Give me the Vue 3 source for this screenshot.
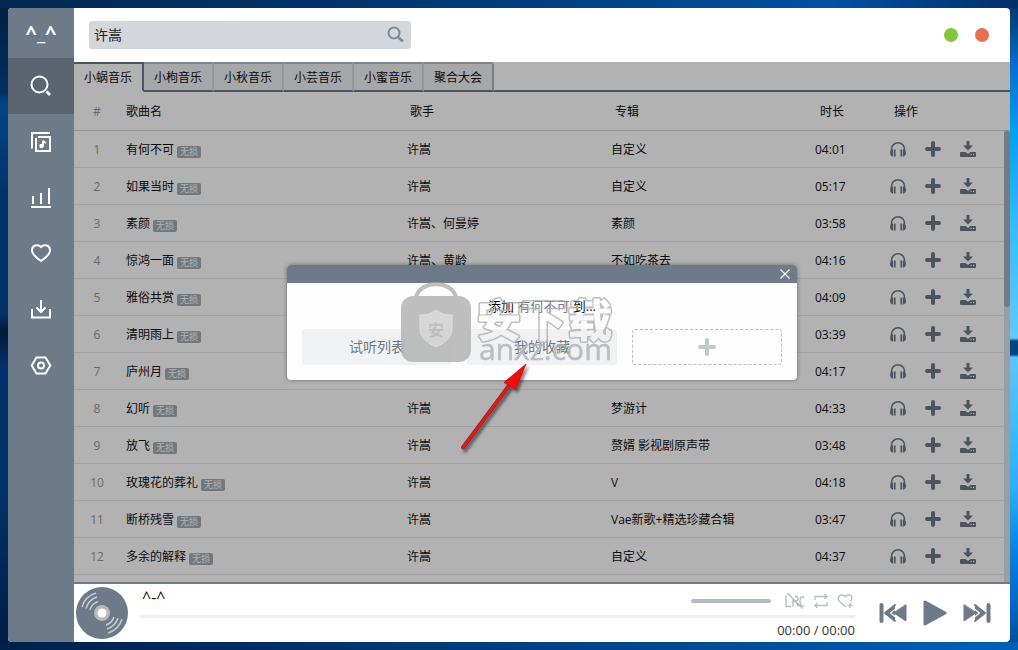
<script setup>
import { ref } from 'vue'

const keyword = ref('许嵩')
const volume = ref(100)
const progress = ref(0)
const tabs = ['小蜗音乐', '小枸音乐', '小秋音乐', '小芸音乐', '小蜜音乐', '聚合大会']
const activeTab = ref(0)

const songs = [
  ['有何不可', '许嵩', '自定义', '04:01'],
  ['如果当时', '许嵩', '自定义', '05:17'],
  ['素颜', '许嵩、何曼婷', '素颜', '03:58'],
  ['惊鸿一面', '许嵩、黄龄', '不如吃茶去', '04:16'],
  ['雅俗共赏', '许嵩', '青年晚报', '04:09'],
  ['清明雨上', '许嵩', '自定义', '03:39'],
  ['庐州月', '许嵩', '寻雾启示', '04:17'],
  ['幻听', '许嵩', '梦游计', '04:33'],
  ['放飞', '许嵩', '赘婿 影视剧原声带', '03:48'],
  ['玫瑰花的葬礼', '许嵩', 'V', '04:18'],
  ['断桥残雪', '许嵩', 'Vae新歌+精选珍藏合辑', '03:47'],
  ['多余的解释', '许嵩', '自定义', '04:37'],
]
</script>

<template>
  <div class="desktop">
    <div class="window">
      <aside class="sidebar">
        <div class="logo">^_^</div>
        <nav>
          <button class="nav active" aria-label="搜索">
            <svg viewBox="0 0 24 24"><circle cx="10.500" cy="10.500" r="8" /><path d="M17.500 17.500l3.500 3.500" stroke-width="2.800" /></svg>
          </button>
          <button class="nav" aria-label="歌单">
            <svg viewBox="0 0 24 24"><path d="M3 18.500V3h18" /><path d="M9 7h12v14H7V8" /><circle cx="12.500" cy="16" r="1.500" fill="#fff" stroke-width="1.500" /><path d="M14 16V10.500c.5 1.500 2.500 1.500 2.500 3" stroke-width="1.800" /></svg>
          </button>
          <button class="nav" aria-label="排行">
            <svg viewBox="0 0 24 24"><path d="M2 21h20M4 18v-8M12 18V7M20 18V2" /></svg>
          </button>
          <button class="nav" aria-label="收藏">
            <svg viewBox="0 0 24 24"><path d="M12 19C7 15.500 3 12 3 8.500 3 3 9 2 12 5 15 2 21 3 21 8.500c0 3.500-4 7-9 10.500z" /></svg>
          </button>
          <button class="nav" aria-label="下载">
            <svg viewBox="0 0 24 24"><path d="M3 11v8.500h18V11M12 2v12M7.500 9.500L12 14l4.500-4.500" /></svg>
          </button>
          <button class="nav" aria-label="设置">
            <svg viewBox="0 0 24 24"><path d="M7.500 3.500h9l4.800 8-4.800 8h-9l-4.800-8z" /><circle cx="12" cy="11.500" r="3" /></svg>
          </button>
        </nav>
      </aside>

      <div class="main">
        <header class="topbar">
          <form class="search" @submit.prevent>
            <input v-model="keyword" type="text" aria-label="搜索歌曲" />
            <button aria-label="搜索">
              <svg viewBox="0 0 18 18"><circle cx="7" cy="7" r="5.500" /><path d="M11.500 11.500l4.500 4" stroke-width="2.600" /></svg>
            </button>
          </form>
          <div class="dots">
            <button class="dot green" aria-label="最小化"></button>
            <button class="dot red" aria-label="关闭"></button>
          </div>
        </header>

        <section class="content">
          <div class="tabs">
            <button
              v-for="(tab, i) in tabs"
              :key="tab"
              class="tab"
              :class="{ current: i === activeTab, last: i === tabs.length - 1 }"
              @click="activeTab = i"
            >{{ tab }}</button>
            <span class="filler"></span>
          </div>

          <div class="list">
            <table>
              <colgroup>
                <col class="c-no" /><col /><col class="c-artist" /><col class="c-album" /><col class="c-time" /><col class="c-ops" />
              </colgroup>
              <thead>
                <tr>
                  <th class="no">#</th>
                  <th>歌曲名</th>
                  <th class="h-artist">歌手</th>
                  <th class="h-album">专辑</th>
                  <th class="h-time">时长</th>
                  <th class="h-ops">操作</th>
                </tr>
              </thead>
              <tbody>
                <tr v-for="(s, i) in songs" :key="s[0]">
                  <td class="no">{{ i + 1 }}</td>
                  <td><div class="name">{{ s[0] }}<span class="badge">无损</span></div></td>
                  <td>{{ s[1] }}</td>
                  <td>{{ s[2] }}</td>
                  <td class="time">{{ s[3] }}</td>
                  <td class="ops">
                    <div>
                      <button aria-label="试听">
                        <svg viewBox="0 0 16 16"><path d="M1.500 10.500V8a6.500 6.200 0 0 1 13 0v2.500" fill="none" stroke="#6d7a89" stroke-width="1.500" /><path d="M3.200 8.500v7H2Q0 15 0 12t2-3.500zM4 8.500h1.600v7H4zM12.800 8.500v7H14q2-.5 2-3.500t-2-3.500zM10.400 8.500H12v7h-1.600z" /></svg>
                      </button>
                      <button aria-label="添加">
                        <svg viewBox="0 0 16 16"><path d="M8 2v12M2 8h12" stroke="#6d7a89" stroke-width="4" stroke-linecap="round" /></svg>
                      </button>
                      <button aria-label="下载">
                        <svg viewBox="0 0 16 16"><path d="M6.500 0h3v4.500H13L8 9.500l-5-5h3.500zM1 11h4.500L8 12.800 10.500 11H15q1 0 1 1v3q0 1-1 1H1q-1 0-1-1v-3q0-1 1-1z" /><path d="M10.500 13.500h1.200M13 13.500h1.200" stroke="#fff" stroke-width="1.200" /></svg>
                      </button>
                    </div>
                  </td>
                </tr>
              </tbody>
            </table>
            <div class="scrollbar"><div class="thumb"></div></div>
          </div>

          <div class="mask">
            <div class="dialog" role="dialog" aria-label="添加到列表">
              <div class="dialog-head">
                <button aria-label="关闭">
                  <svg viewBox="0 0 10 10"><path d="M0.500 0.500l9 9M9.500 0.500l-9 9" /></svg>
                </button>
              </div>
              <div class="dialog-body">
                <p>添加 <span>有何不可</span> 到...</p>
                <div class="choices">
                  <button>试听列表</button>
                  <button>我的收藏</button>
                  <button class="new" aria-label="新建列表">
                    <svg viewBox="0 0 18 18"><path d="M9 2v14M2 9h14" /></svg>
                  </button>
                </div>
              </div>
              <svg class="brand" viewBox="0 0 240 190" aria-hidden="true">
                <defs>
                  <mask id="hollow" maskUnits="userSpaceOnUse" x="0" y="0" width="240" height="190">
                    <rect width="240" height="190" fill="#fff" />
                    <g class="cn inner"><text x="79" y="55">安</text><text x="124" y="55">下</text><text x="170" y="55">载</text></g>
                  </mask>
                  <filter id="soft" x="-20%" y="-20%" width="150%" height="150%">
                    <feDropShadow dx="2" dy="3" stdDeviation="1.500" flood-color="#000" flood-opacity=".5" />
                  </filter>
                </defs>
                <g fill="#b4b4b4" opacity=".85">
                  <path d="M18 15C22-2 54-2 58 15" fill="none" stroke="#b4b4b4" stroke-width="4" />
                  <rect x="3" y="14" width="70" height="66" rx="12" />
                  <path d="M38 28c5 4 10 5 16 5v14c0 9-8 14-16 18-8-4-16-9-16-18V33c6 0 11-1 16-5z" fill="#d0d0d0" stroke="#dcdcdc" />
                  <text class="mini" x="30" y="54">安</text>
                  <g class="cn" mask="url(#hollow)"><text x="79" y="55">安</text><text x="124" y="55">下</text><text x="170" y="55">载</text></g>
                  <text class="latin" x="81" y="78">anxz.com</text>
                </g>
                <g filter="url(#soft)">
                  <path d="M65 165.500L111.500 103" fill="none" stroke="#b01515" stroke-width="4" stroke-linecap="round" />
                  <path d="M65 165.500L111.500 103" fill="none" stroke="#d42020" stroke-width="2.500" stroke-linecap="round" />
                  <path d="M128 82L106 100.500l11.500 7z" fill="#f20a0a" stroke="#c01212" stroke-width=".8" />
                </g>
              </svg>
            </div>
          </div>
        </section>

        <footer class="player">
          <svg class="disc" viewBox="0 0 52 52">
            <circle cx="26" cy="26" r="26" fill="#6d7a89" />
            <g fill="none" stroke="#c3cbd4" stroke-width="1.500">
              <path d="M6 20A21 21 0 0 1 20 6M10 21.500A17 17 0 0 1 21 10M14 23A12.500 12.500 0 0 1 22 14.500" />
              <path d="M46 32A21 21 0 0 1 32 46M42 31A17 17 0 0 1 31 42M38 30A12.500 12.500 0 0 1 30 38" />
            </g>
            <circle cx="26" cy="26" r="8" fill="#b9b9b9" /><circle cx="26" cy="26" r="4.500" fill="#fff" />
          </svg>
          <div class="track">
            <div class="line">
              <span class="title">^-^</span>
              <input v-model="volume" class="volume" type="range" aria-label="音量" />
              <button aria-label="歌词">
                <svg width="20" height="16" viewBox="0 0 20 16"><path d="M1 2v11.500h5M8 13.500V5.500M10 3q3 .5 3 2.800T10 8.500H8.500M10.500 8.500l3 5M19.500 4.500q-4.500-2.500-4.500 3.500t4.500 5M2.500 0L17.500 15.500" /></svg>
              </button>
              <button aria-label="循环">
                <svg width="14" height="16" viewBox="0 0 14 16"><path d="M1 7V3.500h12M10.500 1L13 3.500 10.500 6M13 9v3.500H1M3.500 10L1 12.500 3.500 15" /></svg>
              </button>
              <button aria-label="收藏">
                <svg width="16" height="16" viewBox="0 0 16 16"><path d="M9 14L3 9C-1 5 3-.5 8 3.500 13-.5 17 4 13.500 8.500M13 10v5M10.500 12.500h5" /></svg>
              </button>
            </div>
            <input v-model="progress" class="progress" type="range" aria-label="播放进度" />
            <div class="clock">00:00 / 00:00</div>
          </div>
          <div class="controls">
            <button aria-label="上一首">
              <svg width="28" height="22" viewBox="0 0 28 22"><path d="M2.500 3v16" stroke-width="4" /><path d="M16 3L6 11l10 8" stroke-width="2" class="solid" /><path d="M27 3v16L15 11z" class="solid" stroke-width="1" /><path d="M21 3.500L11.500 11l9.500 7.500" stroke="#fff" stroke-width="1.200" /></svg>
            </button>
            <button aria-label="播放">
              <svg width="24" height="26" viewBox="0 0 24 26"><path d="M2 2v22l20-11z" class="solid" stroke-width="3" /></svg>
            </button>
            <button aria-label="下一首">
              <svg width="28" height="22" viewBox="0 0 28 22"><path d="M25.500 3v16" stroke-width="4" /><path d="M12 3l10 8-10 8" stroke-width="2" class="solid" /><path d="M1 3v16l12-8z" class="solid" stroke-width="1" /><path d="M7 3.500L16.500 11 7 18.500" stroke="#fff" stroke-width="1.200" /></svg>
            </button>
          </div>
        </footer>
      </div>
    </div>
  </div>
</template>

<style>
body {
  margin: 0;
}
</style>

<style scoped>
* {
  box-sizing: border-box;
}
.desktop {
  height: 100vh;
  padding: 8px;
  font-family: "Open Sans", "Noto Sans CJK SC", sans-serif;
  font-size: 12px;
  line-height: 16px;
  color: #111;
  background:
    linear-gradient(90deg, #02284f, #003a75 45%, #0052a2 82%, #003068) top / 100% 8px no-repeat,
    linear-gradient(90deg, #00204a, #003a7a 45%, #0060b4) bottom / 100% 8px no-repeat,
    linear-gradient(#003060, #0a6ccc 10%, #00a0f0 20%, #35bdf8 35%, #66c8f8 52%, #004484 52.5%, #004484 54.5%, #5cc6f8 55%, #2ab0f4 75%, #0a80e0 85%, #0068c8 93%, #004a90) right / 8px 100% no-repeat,
    linear-gradient(#00203f, #002f60 14%, #00448c 16%, #003468 30%, #003468 48%, #001a38 51%, #00306a 56%, #003468 75%, #001c44);
}
.window {
  display: flex;
  height: 100%;
  border-radius: 4px;
  overflow: hidden;
  background: #fff;
}
button {
  padding: 0;
  border: 0;
  background: none;
  font: inherit;
  color: inherit;
}
svg {
  display: block;
}
.sidebar {
  flex: none;
  width: 66px;
  background: #6d7a89;
}
.logo {
  height: 50px;
  line-height: 50px;
  text-align: center;
  color: #fff;
  font-size: 20px;
  font-weight: 700;
}
.nav {
  display: flex;
  width: 100%;
  height: 56px;
  align-items: center;
  justify-content: center;
}
.nav.active {
  background: #5a656f;
}
.nav svg {
  width: 24px;
  height: 24px;
  fill: none;
  stroke: #fff;
  stroke-width: 2;
}
.main {
  flex: 1;
  min-width: 0;
  display: flex;
  flex-direction: column;
}
.topbar {
  flex: none;
  height: 54px;
  padding: 0 21px 0 15px;
  display: flex;
  align-items: center;
  justify-content: space-between;
}
.search {
  display: flex;
  align-items: center;
  width: 322px;
  height: 28px;
  padding: 0 6px 0 5px;
  border-radius: 3px;
  background: #d3d7dc;
}
.search input {
  flex: 1;
  min-width: 0;
  padding: 0;
  border: 0;
  outline: 0;
  background: none;
  font: inherit;
  font-size: 14px;
  color: #222;
}
.search svg {
  width: 18px;
  height: 18px;
  fill: none;
  stroke: #7f8a96;
  stroke-width: 2;
}
.dots {
  display: flex;
  gap: 17px;
}
.dot {
  width: 14px;
  height: 14px;
  border-radius: 50%;
}
.green {
  background: #83c63c;
}
.red {
  background: #e9704c;
}
.content {
  position: relative;
  flex: 1;
  min-height: 0;
  display: flex;
  flex-direction: column;
}
.tabs {
  flex: none;
  display: flex;
  height: 30px;
}
.tab {
  width: 70px;
  padding-top: 2px;
  border-top: 2px solid #b5bcc4;
  border-right: 2px solid #d4d8dc;
  border-bottom: 2px solid #6d7a89;
  background: #eef0f2;
}
.tab.last {
  border-right-color: #b0b7be;
  border-top-right-radius: 3px;
}
.tab.current {
  border-top-color: #6d7a89;
  border-right-color: #6d7a89;
  border-bottom-color: #fff;
  background: #fff;
}
.filler {
  flex: 1;
  border-bottom: 2px solid #6d7a89;
}
.list {
  position: relative;
  flex: 1;
  min-height: 0;
  overflow: hidden;
}
table {
  width: 100%;
  table-layout: fixed;
  border-collapse: separate;
  border-spacing: 0;
}
.c-no { width: 46px; }
.c-artist { width: 204px; }
.c-album { width: 200px; }
.c-time { width: 75px; }
.c-ops { width: 130px; }
th {
  height: 39px;
  padding: 2px 0 0 6px;
  border-bottom: 1px solid #d2d5d8;
  font-weight: 400;
  text-align: left;
}
td {
  height: 37px;
  padding: 2px 0 0 6px;
  border-bottom: 1px solid #e8eaec;
  white-space: nowrap;
}
th.no,
td.no {
  padding-left: 0;
  text-align: center;
  color: #999;
}
th.h-artist { padding-left: 9px; }
th.h-album { padding-left: 10px; }
th.h-time { padding-left: 15px; }
th.h-ops { padding-left: 14px; }
td.time { padding-left: 10px; }
td.ops { padding: 0; }
.ops div {
  display: flex;
}
.ops button {
  width: 35px;
}
.ops svg {
  width: 16px;
  height: 16px;
  margin: 0 auto;
  fill: #6d7a89;
}
.name {
  display: flex;
  align-items: center;
  gap: 3px;
}
.badge {
  width: 24px;
  height: 12px;
  margin-top: 3px;
  border-radius: 2px;
  background: #a5acb5;
  color: #fff;
  font-size: 9px;
  line-height: 12px;
  text-align: center;
}
.scrollbar {
  position: absolute;
  top: 39px;
  right: 0;
  bottom: 0;
  width: 6px;
  background: #dfe2e5;
}
.thumb {
  height: 39%;
  border-radius: 3px;
  background: #a9b0b9;
}
.mask {
  position: absolute;
  inset: 0;
  display: flex;
  align-items: center;
  justify-content: center;
  background: rgba(0, 0, 0, 0.3);
}
.dialog {
  position: relative;
  width: 510px;
  border-radius: 4px;
  background: #fdfdfd;
  box-shadow: 0 0 4px rgba(0, 0, 0, 0.4);
}
.dialog-head {
  display: flex;
  align-items: center;
  justify-content: flex-end;
  height: 18px;
  padding-right: 7px;
  border-radius: 4px 4px 0 0;
  background: #6d7a89;
}
.dialog-head svg {
  width: 10px;
  height: 10px;
  stroke: #fff;
  stroke-width: 1.200;
}
.dialog-body {
  padding: 15px;
}
.dialog-body p {
  margin: 0 0 15px;
  font-size: 13px;
  text-align: center;
}
.dialog-body p span {
  color: #6d7a89;
}
.choices {
  display: grid;
  grid-template-columns: repeat(3, 1fr);
  gap: 15px;
}
.choices button {
  height: 36px;
  border-radius: 3px;
  background: #eff1f3;
  color: #6d7a89;
  font-size: 14px;
}
.choices .new {
  border: 1px dashed #bbb;
  background: none;
}
.new svg {
  width: 18px;
  height: 18px;
  margin: 0 auto;
  stroke: #c2c7cd;
  stroke-width: 4;
  stroke-linecap: round;
}
.brand {
  position: absolute;
  left: 111px;
  top: 17px;
  width: 240px;
  height: 190px;
  pointer-events: none;
}
.cn {
  font-family: "Noto Sans CJK SC", sans-serif;
  font-size: 44px;
  font-weight: 700;
  stroke: #b4b4b4;
  stroke-width: 4;
  stroke-linejoin: round;
}
.cn.inner {
  fill: #000;
  stroke: #000;
  stroke-width: 1;
}
.mini {
  font-family: "Noto Sans CJK SC", sans-serif;
  font-size: 16px;
  font-weight: 700;
}
.latin {
  font-size: 30px;
  font-weight: 400;
  stroke: #b4b4b4;
  stroke-width: 0.5;
}
.player {
  flex: none;
  display: flex;
  align-items: center;
  height: 60px;
  padding: 0 19px 0 2px;
  border-top: 2px solid #6d7a89;
}
.disc {
  flex: none;
  width: 52px;
  height: 52px;
}
.track {
  flex: 1;
  min-width: 0;
  margin: 0 24px 0 12px;
}
.line {
  display: flex;
  align-items: center;
  height: 31px;
  padding: 2px 2px 0;
}
.line button + button {
  margin-left: 9px;
}
.line svg {
  fill: none;
  stroke: #b4bbc3;
  stroke-width: 1.300;
}
.title {
  flex: 1;
  padding-bottom: 8px;
  font-size: 16px;
}
input[type="range"] {
  display: block;
  margin: 0;
  appearance: none;
  outline: 0;
}
input[type="range"]::-webkit-slider-thumb {
  appearance: none;
  width: 0;
  height: 0;
}
input.volume[type="range"] {
  width: 80px;
  height: 4px;
  margin-right: 14px;
  border-radius: 2px;
  background: #b4bbc3;
}
.progress {
  width: 100%;
  height: 3px;
  background: #eee;
}
.clock {
  height: 24px;
  line-height: 24px;
  font-size: 13px;
  text-align: right;
  color: #333;
}
.controls {
  display: flex;
  align-items: center;
  gap: 16px;
}
.controls svg {
  fill: none;
  stroke: #6d7a89;
  stroke-linecap: round;
  stroke-linejoin: round;
}
.controls .solid {
  fill: #6d7a89;
}
</style>
